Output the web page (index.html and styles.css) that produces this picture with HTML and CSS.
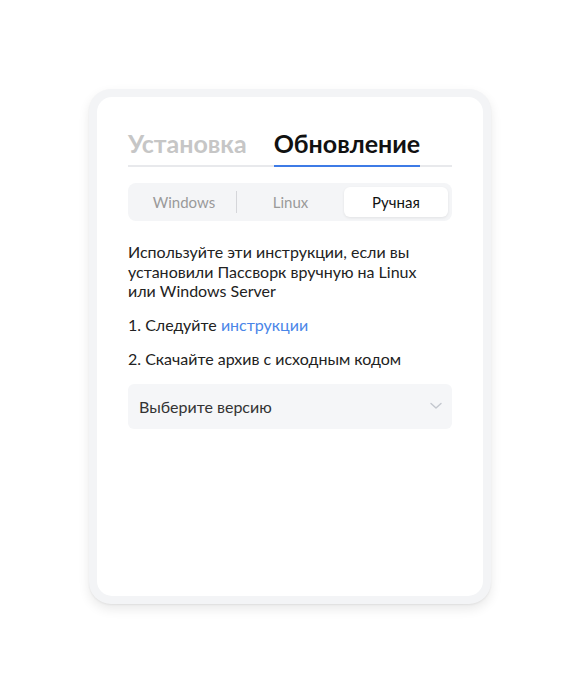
FILE: index.html
```html
<!DOCTYPE html>
<html lang="ru">
<head>
<meta charset="utf-8">
<link rel="stylesheet" href="styles.css">
</head>
<body>
<div class="page">
  <div class="frame">
    <div class="card">
      <div class="tabs">
        <div class="tab">Установка</div>
        <div class="tab active">Обновление</div>
      </div>
      <div class="seg">
        <div class="seg-item">Windows</div>
        <div class="seg-div"></div>
        <div class="seg-item">Linux</div>
        <div class="seg-item on">Ручная</div>
      </div>
      <p class="desc">Используйте эти инструкции, если вы установили Пассворк вручную на Linux или Windows Server</p>
      <p class="step">1. Следуйте <a class="link">инструкции</a></p>
      <p class="step">2. Скачайте архив с исходным кодом</p>
      <div class="select">
        <span>Выберите версию</span>
        <svg width="12" height="8" viewBox="0 0 12 8"><path d="M1 1.5l5 4.5 5-4.5" fill="none" stroke="#c3c7ce" stroke-width="1.4" stroke-linecap="round" stroke-linejoin="round"/></svg>
      </div>
    </div>
  </div>
</div>
</body>
</html>
```
FILE: styles.css
```css
* { box-sizing: border-box; }
html, body { margin: 0; padding: 0; background: #fff; }
body { font-family: Lato, "Noto Sans", sans-serif; color: #1f1f1f; }
.page { width: 580px; height: 692px; padding: 89px 89px 0 89px; }
.frame {
  width: 402px; height: 515px;
  background: #f3f4f6;
  border-radius: 22px;
  padding: 8px;
  box-shadow: 0 5px 12px rgba(0,0,0,0.09), 0 1px 2px rgba(0,0,0,0.06);
}
.card {
  background: #fff;
  border-radius: 15px;
  height: 100%;
  padding: 31px 31px 0 31px;
}
.tabs {
  display: flex; gap: 27px;
  border-bottom: 2px solid #e8e9ec;
}
.tab {
  font-size: 25px; font-weight: 700; color: #c6c6c6;
  padding-bottom: 7px; line-height: 30px;
  margin-bottom: -2px;
  border-bottom: 2px solid transparent;
}
.tab.active { color: #111; border-bottom-color: #3e7be6; }
.seg {
  margin-top: 16px;
  height: 38px;
  background: #f4f5f7;
  border-radius: 8px;
  display: flex; align-items: center;
  padding: 4px;
}
.seg-item {
  flex: 1; text-align: center; font-size: 15px; color: #9a9a9a;
  height: 30px; line-height: 30px;
}
.seg-div { width: 1px; height: 22px; background: #d5d6da; }
.seg-item.on {
  background: #fff; color: #111; border-radius: 6px;
  box-shadow: 0 1px 3px rgba(0,0,0,0.08);
  flex: 0 0 104px;
}
.seg-item:first-child { flex: 0 0 104px; }
.desc { margin: 21px 0 0; max-width: 296px; font-size: 16px; line-height: 19.5px; color: #222; }
.step { margin: 14px 0 0; font-size: 16px; line-height: 20px; color: #222; }
.link { color: #4a86e8; }
.select {
  margin-top: 15px; height: 45px; background: #f5f6f8; border-radius: 6px;
  display: flex; align-items: center; justify-content: space-between;
  padding: 0 10px 0 11px; font-size: 16px; color: #333;
}
```
